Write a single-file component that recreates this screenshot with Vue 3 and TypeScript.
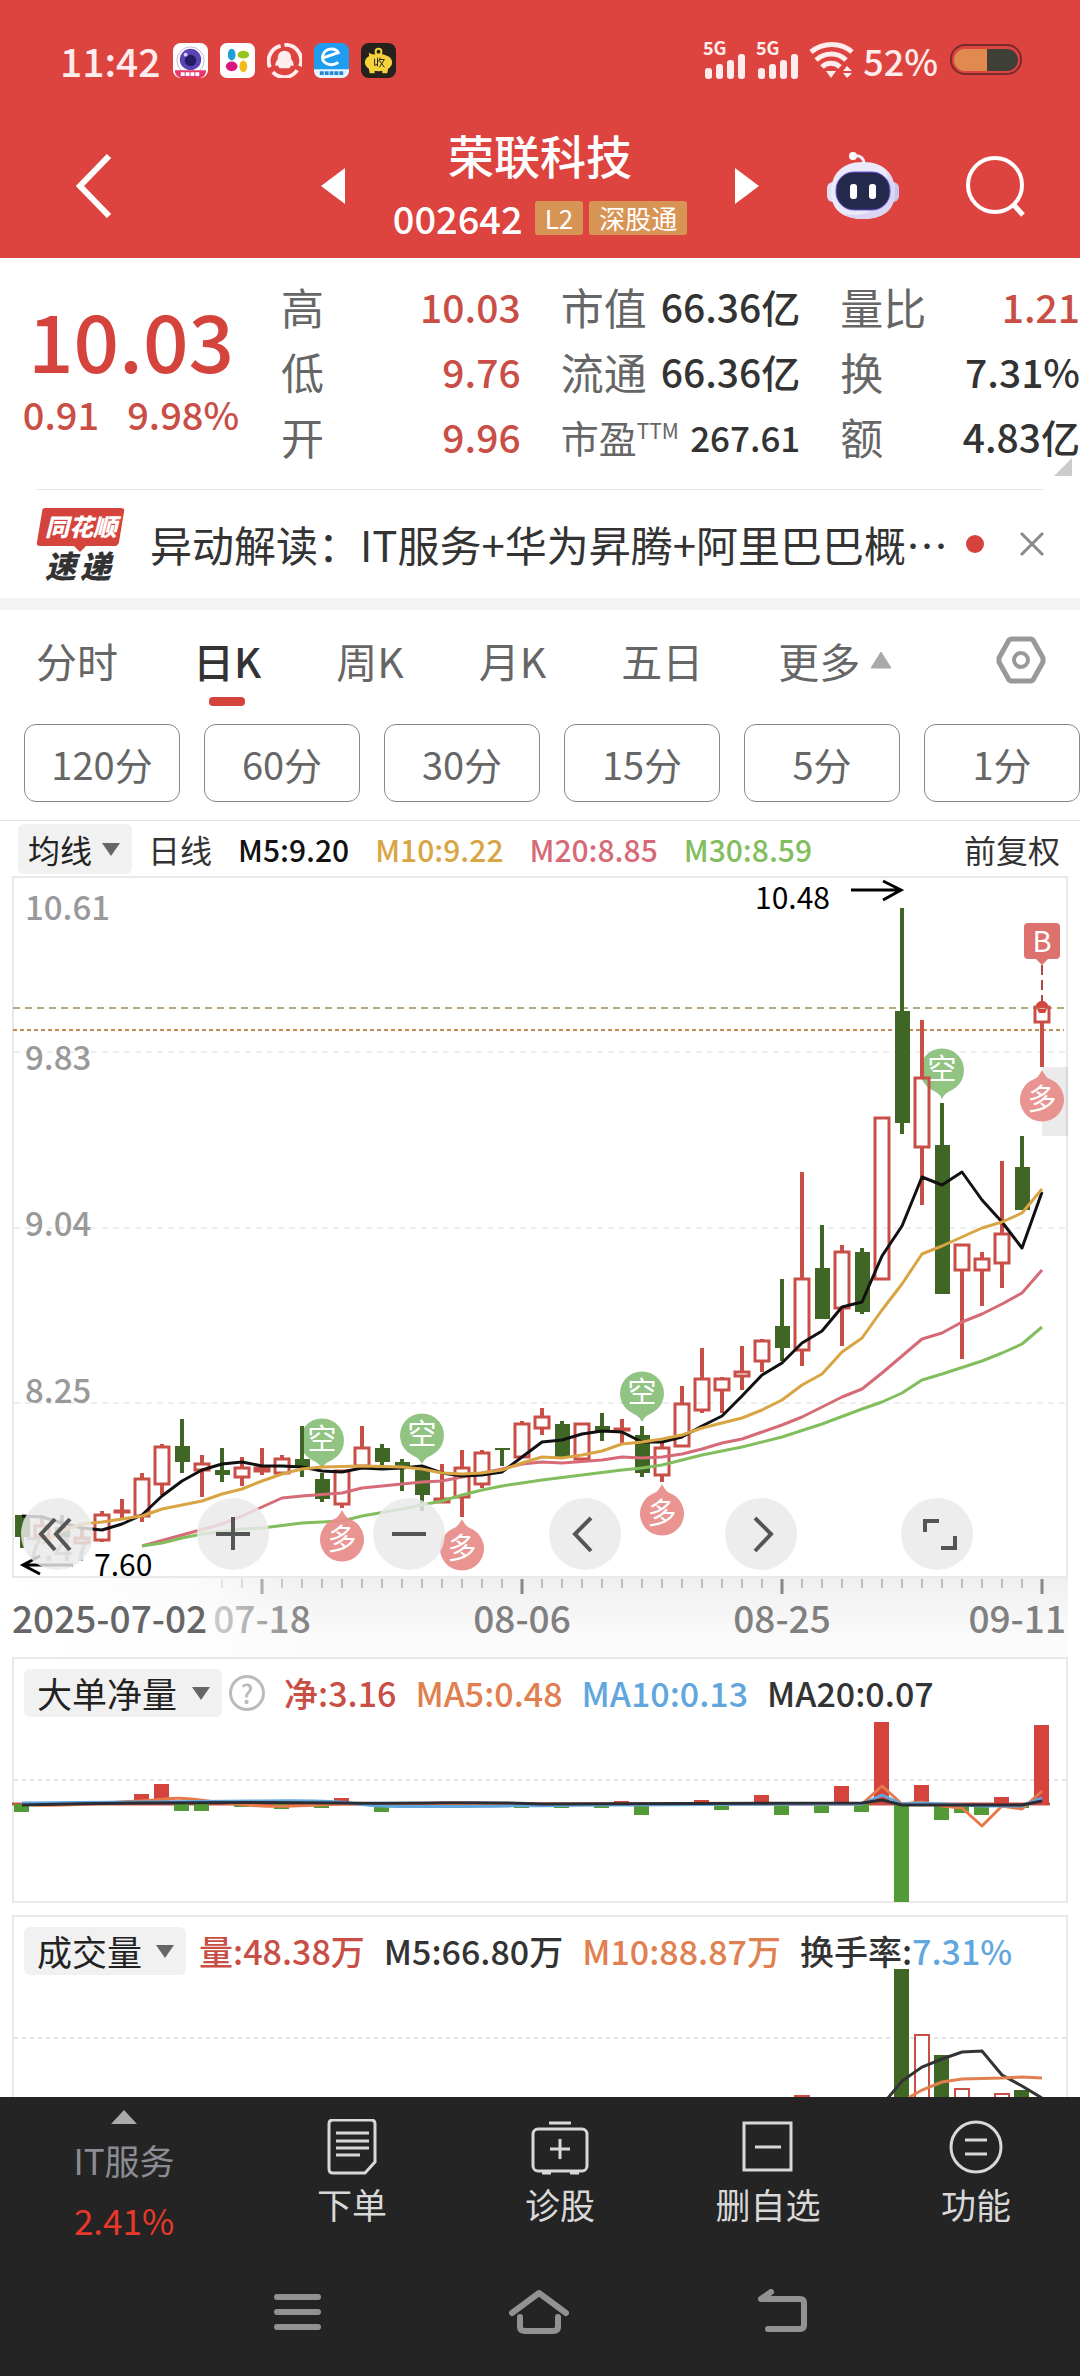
<script setup lang="ts">
import { ref } from 'vue'

type Candle = [high: number, top: number, bottom: number, low: number, up: 0 | 1]

const STEP = 20
const FIRST = 22
const cx = (i: number) => FIRST + i * STEP

const candles: Candle[] = [
  [1515, 1515, 1537, 1548, 0], [1515, 1525, 1537, 1537, 1], [1515, 1527, 1537, 1537, 0], [1528, 1537, 1544, 1544, 1],
  [1511, 1514, 1541, 1542, 1], [1499, 1510, 1512, 1518, 1], [1473, 1478, 1517, 1522, 1], [1444, 1446, 1485, 1495, 1],
  [1419, 1446, 1462, 1473, 0], [1455, 1463, 1471, 1497, 1], [1448, 1470, 1475, 1482, 0], [1457, 1467, 1478, 1486, 1],
  [1448, 1467, 1472, 1475, 1], [1455, 1458, 1474, 1474, 1], [1426, 1459, 1467, 1477, 0], [1473, 1479, 1499, 1502, 0],
  [1470, 1470, 1505, 1508, 1], [1426, 1447, 1467, 1467, 1], [1444, 1448, 1462, 1465, 0], [1459, 1462, 1466, 1491, 0],
  [1466, 1470, 1495, 1511, 0], [1464, 1498, 1503, 1503, 1], [1450, 1467, 1498, 1517, 1], [1450, 1452, 1485, 1488, 1],
  [1448, 1448, 1450, 1466, 0], [1421, 1423, 1458, 1458, 1], [1408, 1416, 1429, 1435, 1], [1421, 1424, 1457, 1457, 0],
  [1423, 1423, 1460, 1460, 1], [1413, 1426, 1431, 1441, 0], [1419, 1428, 1431, 1444, 1], [1426, 1435, 1473, 1477, 0],
  [1443, 1447, 1476, 1482, 1], [1386, 1403, 1447, 1447, 1], [1348, 1378, 1411, 1413, 1], [1377, 1378, 1391, 1413, 1],
  [1346, 1371, 1377, 1390, 1], [1339, 1340, 1362, 1372, 1], [1279, 1326, 1348, 1361, 0], [1172, 1278, 1351, 1366, 1],
  [1225, 1268, 1319, 1319, 0], [1245, 1251, 1309, 1346, 1], [1248, 1252, 1312, 1314, 0], [1117, 1117, 1280, 1280, 1],
  [908, 1011, 1123, 1134, 0], [1020, 1077, 1148, 1205, 1], [1103, 1145, 1294, 1294, 0], [1244, 1244, 1271, 1359, 1],
  [1252, 1258, 1271, 1306, 1], [1161, 1233, 1264, 1288, 1], [1136, 1167, 1210, 1210, 0], [1007, 1006, 1023, 1067, 1],
]

const averages = [
  { color: '#d66b77', points: '142,1546 182,1535 222,1524 242,1516 262,1507 282,1498 302,1496 342,1493 362,1488 382,1486 422,1482 442,1481 462,1477 482,1473 502,1469 522,1464 542,1462 562,1463 602,1460 622,1457 642,1458 662,1457 682,1454 702,1449 722,1443 742,1439 762,1432 782,1425 802,1417 822,1407 842,1397 862,1389 882,1373 902,1356 922,1339 942,1333 962,1322 982,1314 1002,1304 1022,1293 1042,1270' },
  { color: '#82bd5e', points: '142,1546 162,1543 182,1538 202,1534 242,1529 262,1528 302,1523 342,1521 362,1516 402,1509 442,1501 462,1495 482,1490 502,1486 522,1483 542,1480 582,1475 622,1470 642,1468 662,1465 702,1455 742,1447 782,1437 822,1424 862,1409 882,1402 902,1393 922,1380 942,1374 982,1361 1002,1353 1022,1344 1042,1327' },
  { color: '#111', points: '22,1516 42,1517 62,1523 82,1528 102,1530 122,1524 142,1515 162,1496 182,1481 202,1470 222,1464 242,1462 262,1466 282,1466 302,1467 322,1471 342,1472 362,1468 382,1469 402,1468 422,1466 442,1473 462,1476 482,1475 502,1472 522,1457 542,1442 562,1440 582,1434 602,1431 622,1432 642,1442 662,1442 682,1437 702,1426 722,1416 742,1396 762,1375 782,1363 802,1343 822,1331 842,1307 862,1302 882,1256 902,1226 922,1177 942,1185 962,1172 982,1200 1002,1222 1022,1248 1042,1192' },
  { color: '#d9a544', points: '42,1544 62,1531 82,1524 102,1522 122,1519 142,1516 162,1509 182,1505 202,1501 222,1494 242,1489 262,1481 282,1474 302,1469 322,1467 362,1466 402,1467 422,1469 442,1473 462,1474 482,1473 502,1470 522,1463 542,1457 562,1458 582,1455 602,1451 622,1444 642,1442 662,1439 682,1435 702,1428 722,1423 742,1418 762,1410 782,1400 802,1385 822,1374 842,1352 862,1338 882,1310 902,1284 922,1254 942,1246 962,1237 982,1228 1002,1222 1022,1213 1042,1189' },
]

const sells = [[322, 1441], [422, 1436], [642, 1394], [942, 1071]]
const buys = [[342, 1540], [462, 1549], [662, 1514], [1042, 1100]]
const priceLabels = [
  { y: 920, text: '10.61' }, { y: 1070, text: '9.83' }, { y: 1236, text: '9.04' },
  { y: 1403, text: '8.25' }, { y: 1561, text: '7.47' },
]

const ticks = Array.from({ length: 42 }, (_, n) => ({ x: cx(n + 10), major: n % 13 === 2 }))

// net large-order flow: [candle index, bar end]
const flow: [number, number][] = [
  [0, 1812], [6, 1794], [7, 1784], [8, 1811], [9, 1811], [11, 1807], [13, 1809], [15, 1808], [16, 1798], [18, 1812],
  [20, 1807], [25, 1808], [27, 1808], [29, 1808], [30, 1801], [31, 1815], [34, 1800], [35, 1810], [37, 1795],
  [38, 1815], [40, 1813], [41, 1786], [42, 1812], [43, 1722], [44, 1902], [45, 1785], [46, 1820], [47, 1813],
  [48, 1815], [49, 1797], [50, 1808], [51, 1725],
]
const volumes: [number, number, 0 | 1][] = [
  [39, 2095, 1], [44, 1969, 0], [45, 2034, 1], [46, 2055, 0], [47, 2088, 1], [49, 2093, 1], [50, 2090, 0],
]

const tabs = ['分时', '日K', '周K', '月K', '五日', '更多']
const active = ref('日K')
const periods = ['120分', '60分', '30分', '15分', '5分', '1分']
const tools = [
  { name: '最左', d: 'M34 21 20 36l14 16M49 21 35 36l14 16' },
  { name: '放大', d: 'M36 19v33M19 36h34' },
  { name: '缩小', d: 'M19 36h34' },
  { name: '左移', d: 'M42 20 26 36l16 17' },
  { name: '右移', d: 'M30 20l16 16-16 17' },
  { name: '全屏', d: 'M24 34V23h14M40 50h14V38' },
]
</script>

<template>
  <div class="page">
    <header class="top">
      <div class="status">
        <span class="clock">11:42</span>
        <svg class="app" viewBox="0 0 36 36"><rect width="36" height="36" rx="8" fill="#fff" /><circle cx="18" cy="18" r="14" fill="none" stroke="#b8b8d8" /><circle cx="18" cy="17" r="11" fill="#5b43b5" /><circle cx="18" cy="18" r="6" fill="#241d63" /><circle cx="13" cy="12" r="2" fill="#d9d0ff" /><path d="M2 28h32c0 5-3 8-8 8H10c-5 0-8-3-8-8z" fill="#e8386b" /><path d="M8 32h20" stroke="#fff" stroke-width="4" stroke-dasharray="4 1" /></svg>
        <svg class="app" viewBox="0 0 36 36"><rect width="36" height="36" rx="7" fill="#fff" /><ellipse cx="12" cy="12" rx="4" ry="6" fill="#1e9fd8" /><ellipse cx="24" cy="12" rx="6" ry="4" fill="#93c51e" /><ellipse cx="12" cy="24" rx="6" ry="5" fill="#d9177f" /><ellipse cx="24" cy="24" rx="4" ry="6" fill="#f3b916" /></svg>
        <svg class="app" viewBox="0 0 36 36"><g fill="none" stroke="#ffecec" stroke-width="4"><path d="M3 25A16 16 0 0 1 14 3" /><path d="M18 2a16 16 0 0 1 16 22" /><path d="M31 28a16 16 0 0 1-25 2" /></g><path d="M18 8c5 0 7 4 7 9 2 2 3 5 2 7l-2-1-2 3H13l-2-3-2 1c-1-2 0-5 2-7 0-5 2-9 7-9z" fill="#ffecec" /></svg>
        <svg class="app" viewBox="0 0 36 36"><rect width="36" height="36" rx="8" fill="#1d9cf0" /><path d="M0 27h36v1c0 5-3 8-8 8H8c-5 0-8-3-8-8z" fill="#e6f6ff" /><path d="M10 15l15-5C22 4 11 5 9 13s8 12 16 7" fill="none" stroke="#fff" stroke-width="3" /><path d="M6 31h24" stroke="#2387d8" stroke-width="4" stroke-dasharray="4 1" /></svg>
        <svg class="app" viewBox="0 0 36 36"><rect width="36" height="36" rx="8" fill="#25221d" /><ellipse cx="18" cy="20" rx="14" ry="9" fill="#f6d33c" /><path d="M8 26h6v5H9zM22 26h6l-1 5h-5zM8 10l7 3-6 4z" fill="#f6d33c" /><circle cx="18" cy="9" r="3" fill="none" stroke="#f6d33c" stroke-width="2" /><path d="M14 16v7l3-1M17 15v9M20 15l-2 4M19 17h5l-5 8M19 18l5 7" fill="none" stroke="#25221d" /></svg>
        <span class="grow"></span>
        <svg v-for="n in 2" :key="n" class="signal" viewBox="0 0 44 38"><text x="0" y="14" class="five">5G</text><g fill="#ffecec"><rect x="2" y="27" width="7" height="11" rx="3" /><rect x="13" y="23" width="7" height="15" rx="3" /><rect x="24" y="19" width="7" height="19" rx="3" /><rect x="35" y="13" width="7" height="25" rx="3" /></g></svg>
        <svg class="wifi" viewBox="0 0 46 38"><g fill="none" stroke="#ffecec" stroke-width="5"><path d="M2 11c12-10 30-10 41 0" /><path d="M7 19c9-8 22-8 30 0" /><path d="M13 26c5-5 13-5 18 0" /></g><path d="M17 30h10l-5 7zM34 30l4-5 5 5zM34 32h9l-5 5z" fill="#ffecec" /></svg>
        <span class="percent">52%</span>
        <svg class="battery" viewBox="0 0 72 32"><rect x="1" y="1" width="70" height="29" rx="14" fill="none" stroke="#7a2a2a" stroke-width="2" /><path d="M37 5v22H15a11 11 0 0 1 0-22z" fill="#e08a50" /><path d="M37 5v22h20a11 11 0 0 0 0-22z" fill="#3e4038" /></svg>
      </div>
      <div class="bar">
        <div class="left">
          <button aria-label="返回"><svg width="36" height="66" viewBox="0 0 36 66"><path d="M33 3 4 33l29 30" fill="none" stroke="#fff" stroke-width="6" /></svg></button>
          <button aria-label="上一只"><svg width="24" height="36" viewBox="0 0 24 36"><path d="M24 0v36L0 18z" fill="#fff" /></svg></button>
        </div>
        <div class="title">
          <h1>荣联科技</h1>
          <div class="code"><span>002642</span><em>L2</em><em>深股通</em></div>
        </div>
        <div class="right">
          <button aria-label="下一只"><svg width="24" height="36" viewBox="0 0 24 36"><path d="M0 0v36l24-18z" fill="#fff" /></svg></button>
          <button aria-label="智能助手">
            <svg width="72" height="68" viewBox="0 0 72 68"><circle cx="26" cy="4" r="4" fill="#fff" /><path d="M27 4c6-1 10 2 10 8" fill="none" stroke="#f3efff" stroke-width="3" /><rect x="0" y="30" width="12" height="20" rx="6" fill="#e3e0f6" /><rect x="60" y="30" width="12" height="20" rx="6" fill="#c9c4ee" /><path d="M36 10c22 0 32 13 32 30 0 18-12 27-32 27S4 58 4 40c0-17 10-30 32-30z" fill="#ece9fa" /><path d="M60 20c5 5 8 12 8 20 0 18-12 27-32 27-8 0-15-2-21-5 30 4 46-6 45-42z" fill="#d9d5f3" /><rect x="9" y="20" width="54" height="38" rx="18" fill="#232a4c" stroke="#6a53d8" stroke-width="1" /><rect x="23" y="32" width="7" height="15" rx="3" fill="#fff" /><rect x="42" y="32" width="7" height="15" rx="3" fill="#fff" /></svg>
          </button>
          <button aria-label="搜索"><svg width="60" height="62" viewBox="0 0 60 62"><circle cx="29" cy="30" r="27" fill="none" stroke="#fff" stroke-width="4" /><path d="M47 49l10 11" stroke="#fff" stroke-width="5" /></svg></button>
        </div>
      </div>
    </header>

    <section class="quote">
      <div class="price">
        <strong>10.03</strong>
        <p><span>0.91</span><span>9.98%</span></p>
      </div>
      <div class="cols">
        <dl class="red">
          <div><dt>高</dt><dd>10.03</dd></div>
          <div><dt>低</dt><dd>9.76</dd></div>
          <div><dt>开</dt><dd>9.96</dd></div>
        </dl>
        <dl>
          <div><dt>市值</dt><dd>66.36亿</dd></div>
          <div><dt>流通</dt><dd>66.36亿</dd></div>
          <div class="small"><dt>市盈<sup>TTM</sup></dt><dd>267.61</dd></div>
        </dl>
        <dl>
          <div class="red"><dt>量比</dt><dd>1.21</dd></div>
          <div><dt>换</dt><dd>7.31%</dd></div>
          <div><dt>额</dt><dd>4.83亿</dd></div>
        </dl>
      </div>
      <i class="corner"></i>
    </section>

    <section class="news">
      <svg width="90" height="74" viewBox="0 0 90 74">
        <path d="M9 1h76q4 0 3 4l-5 30q-1 4-4 4H50l-6 6-6-6H4q-4 0-3-4L6 5q0-4 3-4z" fill="#d5433d" />
        <text x="9" y="29" class="logo-a">同花顺</text>
        <text x="9" y="71" class="logo-b">速</text><text x="44" y="71" class="logo-b">递</text>
      </svg>
      <a href="#">异动解读：IT服务+华为昇腾+阿里巴巴概⋯</a>
      <i class="dot"></i>
      <button aria-label="关闭"><svg width="24" height="24" viewBox="0 0 24 24"><path d="M1 1l22 22M23 1 1 23" stroke="#8a8a8a" stroke-width="3" /></svg></button>
    </section>

    <nav class="tabs">
      <button v-for="t in tabs" :key="t" :class="{ on: t === active }" @click="active = t">
        {{ t }}<svg v-if="t === '更多'" width="22" height="18" viewBox="0 0 22 18"><path d="M11 1 21 17H1z" fill="#a9a9a9" stroke="#a9a9a9" stroke-linejoin="round" /></svg>
      </button>
      <button class="gear" aria-label="设置"><svg width="50" height="48" viewBox="0 0 50 48"><path d="M15 3h20l2 1 10 18v4L37 44l-2 1H15l-2-1L3 26v-4L13 4z" fill="none" stroke="#999" stroke-width="5" stroke-linejoin="round" /><circle cx="25" cy="24" r="7" fill="none" stroke="#999" stroke-width="4" /></svg></button>
    </nav>
    <div class="periods"><button v-for="p in periods" :key="p">{{ p }}</button></div>

    <div class="ma">
      <label class="pick main"><select aria-label="主图指标"><option>均线</option></select><i></i></label>
      <span class="ri">日线</span>
      <b style="color: #111">M5:9.20</b>
      <b style="color: #d9a544">M10:9.22</b>
      <b style="color: #d66b77">M20:8.85</b>
      <b style="color: #82bd5e">M30:8.59</b>
      <span class="fq">前复权</span>
    </div>

    <section class="kline">
      <svg viewBox="12 876 1056 702" class="draw">
        <rect x="13" y="877" width="1054" height="700" fill="#fff" stroke="#e9e9e9" stroke-width="2" />
        <g stroke="#ddd" stroke-width="1" stroke-dasharray="6 5"><path d="M14 1052h1052M14 1228h1052M14 1403h1052" /></g>
        <path d="M13 1008h1051" stroke="#b3ab7d" stroke-width="2" stroke-dasharray="7 5" />
        <path d="M13 1030h1051" stroke="#c48d57" stroke-width="2" stroke-dasharray="4 3" />
        <rect x="1042" y="1067" width="26" height="69" fill="#000" opacity=".08" />
        <text v-for="l in priceLabels" :key="l.y" x="25" :y="l.y" class="scale">{{ l.text }}</text>
        <g v-for="(p, i) in sells" :key="'s' + i">
          <path :transform="`translate(${p[0]} ${p[1]})`" d="M0 28c-3-6-6-7-10-9a22 22 0 1 1 20 0c-4 2-7 3-10 9z" fill="#91c383" />
          <text :x="p[0]" :y="p[1] + 9" class="mark">空</text>
        </g>
        <g v-for="(c, i) in candles" :key="i" :stroke="c[4] ? '#c84e46' : '#3f6624'">
          <path :d="`M${cx(i)} ${c[0]}V${c[1]}M${cx(i)} ${c[2]}V${c[3]}`" stroke-width="4" />
          <rect v-if="c[4]" :x="cx(i) - 7" :y="c[1] + 1" width="14" :height="Math.max(c[2] - c[1] - 2, 1)" fill="none" stroke-width="3" />
          <rect v-else :x="cx(i) - 7" :y="c[1]" width="15" :height="c[2] - c[1]" fill="#3f6624" stroke="none" />
        </g>
        <polyline v-for="a in averages" :key="a.color" :points="a.points" fill="none" :stroke="a.color" stroke-width="3" stroke-linejoin="round" />
        <g v-for="(p, i) in buys" :key="'b' + i">
          <path :transform="`translate(${p[0]} ${p[1]})`" d="M0-30c3 6 6 9 10 10a22 22 0 1 1-20 0c4-1 7-4 10-10z" fill="#e88d8a" fill-opacity=".94" />
          <text :x="p[0]" :y="p[1] + 10" class="mark">多</text>
        </g>
        <path d="M1028 923h28q4 0 4 4v28q0 4-4 4h-8l-6 6-6-6h-8q-4 0-4-4v-28q0-4 4-4z" fill="#dd716e" />
        <text x="1042" y="952" class="mark">B</text>
        <path d="M1042 965v38" stroke="#a84a48" stroke-width="2" stroke-dasharray="10 5" />
        <path d="M1036 1006a6 5 0 0 1 12 0zM1037 1009h10l-2 4h-6z" fill="#d5433d" />
        <text x="755" y="909" class="peak">10.48</text>
        <path d="M851 890h50M883 881l18 9-18 10" fill="none" stroke="#000" stroke-width="3" />
        <text x="94" y="1576" class="peak">7.60</text>
        <path d="M73 1565H24M40 1556l-17 9 17 9" fill="none" stroke="#000" stroke-width="3" />
      </svg>
      <div class="tools">
        <button v-for="t in tools" :key="t.name" :aria-label="t.name"><svg viewBox="0 0 72 72"><path :d="t.d" fill="none" stroke="#555" stroke-width="4" /></svg></button>
      </div>
    </section>

    <div class="axis">
      <svg viewBox="12 1578 1056 79" class="draw">
        <defs><linearGradient id="fade"><stop offset="0" stop-color="#fff" /><stop offset=".6" stop-color="#fff" stop-opacity=".75" /><stop offset="1" stop-color="#fff" stop-opacity="0" /></linearGradient></defs>
        <path v-for="t in ticks" :key="t.x" :d="`M${t.x} 1579v${t.major ? 15 : 9}`" stroke="#888" :stroke-width="t.major ? 3 : 1" />
        <g class="date" text-anchor="middle"><text x="262" y="1633">07-18</text><text x="522" y="1633">08-06</text><text x="782" y="1633">08-25</text></g>
        <text class="date" x="1066" y="1633" text-anchor="end">09-11</text>
        <rect x="12" y="1578" width="300" height="79" fill="url(#fade)" />
        <text class="date start" x="12" y="1633">2025-07-02</text>
      </svg>
    </div>

    <section class="panel">
      <div class="head">
        <label class="pick flow"><select aria-label="副图指标一"><option>大单净量</option></select><i></i></label>
        <button class="help" aria-label="说明">?</button>
        <b style="color: #c84e46">净:3.16</b><b style="color: #e07f50">MA5:0.48</b><b style="color: #62a6de">MA10:0.13</b><b>MA20:0.07</b>
      </div>
      <svg viewBox="12 1657 1056 246" class="draw">
        <rect x="13" y="1658" width="1054" height="244" fill="none" stroke="#e9e9e9" stroke-width="2" />
        <path d="M14 1780h1052" stroke="#e4e4e4" stroke-width="2" stroke-dasharray="4 4" />
        <path d="M12 1804h1038" stroke="#c84e46" stroke-width="3" />
        <rect v-for="[i, y] in flow" :key="i" :x="cx(i) - 8" :y="Math.min(y, 1804)" width="15" :height="Math.abs(y - 1804)" :fill="y < 1804 ? '#d5433d' : '#529a35'" />
        <g fill="none" stroke-width="3" stroke-linejoin="round">
          <path d="M22 1804C60 1808 110 1802 140 1801S170 1796 200 1800 240 1805 262 1806 300 1806 340 1804L862 1804 882 1786 902 1804 922 1802 942 1806 962 1808 982 1826 1002 1806 1022 1809 1042 1791" stroke="#e8794a" />
          <path d="M22 1803C80 1802 160 1802 262 1801S342 1804 382 1806 560 1804 862 1804L882 1795 902 1804 922 1803 982 1806 1022 1806 1042 1798" stroke="#62a6de" />
          <path d="M22 1805C120 1803 240 1802 342 1803S480 1801 542 1804L862 1803 882 1800 902 1805 1022 1805 1042 1801" stroke="#2c2c34" />
        </g>
      </svg>
    </section>

    <section class="panel last">
      <div class="head">
        <label class="pick vol"><select aria-label="副图指标二"><option>成交量</option></select><i></i></label>
        <b style="color: #c84e46">量:48.38万</b><b>M5:66.80万</b><b style="color: #e07f50">M10:88.87万</b><b>换手率:<span>7.31%</span></b>
      </div>
      <svg viewBox="12 1915 1056 182" class="draw">
        <path d="M13 2097V1916H1067V2097" fill="none" stroke="#e9e9e9" stroke-width="2" />
        <path d="M14 2038h1052" stroke="#e4e4e4" stroke-width="2" stroke-dasharray="4 4" />
        <g v-for="[i, y, up] in volumes" :key="i">
          <rect v-if="up" :x="cx(i) - 7" :y="y + 1" width="14" height="200" fill="#fff" stroke="#c84e46" stroke-width="2" />
          <rect v-else :x="cx(i) - 8" :y="y" width="15" height="200" fill="#3f6624" />
        </g>
        <polyline points="888,2098 902,2081 922,2067 942,2059 962,2052 982,2051 1002,2075 1022,2086 1042,2098" fill="none" stroke="#333" stroke-width="3" />
        <polyline points="908,2098 922,2090 942,2082 962,2079 1002,2078 1022,2077 1042,2078" fill="none" stroke="#e07f50" stroke-width="3" />
      </svg>
    </section>

    <footer>
      <div class="actions">
        <button class="sector"><svg width="28" height="16" viewBox="0 0 28 16"><path d="M14 1 27 15H1z" fill="#aaa" /></svg><span>IT服务</span><em>2.41%</em></button>
        <button><svg width="56" height="56" viewBox="0 0 56 56"><path d="M9 1h38q4 0 4 4v38L41 54H9q-4 0-4-4V5q0-4 4-4z" /><path d="M12 14h33M12 22h33M12 29h33M12 36h24" /></svg>下单</button>
        <button><svg width="60" height="56" viewBox="0 0 60 56"><rect x="3" y="10" width="54" height="42" rx="5" /><path d="M19 4h22M30 20v20M20 30h20M12 54h9M40 54h9" /></svg>诊股</button>
        <button><svg width="56" height="56" viewBox="0 0 56 56"><rect x="4" y="4" width="47" height="47" /><path d="M15 28h26" /></svg>删自选</button>
        <button><svg width="56" height="56" viewBox="0 0 56 56"><circle cx="28" cy="28" r="25" /><path d="M17 21h22M17 35h22" /></svg>功能</button>
      </div>
      <div class="system">
        <button aria-label="最近任务"><svg width="48" height="44" viewBox="0 0 48 44"><path d="M4 7h41M4 22h41M4 37h41" /></svg></button>
        <button aria-label="主屏幕"><svg width="60" height="46" viewBox="0 0 60 46"><path d="M3 24 30 4l27 20M11 28v10q0 4 5 4h28q5 0 5-4V28" /></svg></button>
        <button aria-label="后退"><svg width="50" height="46" viewBox="0 0 50 46"><path d="M14 3 4 10h39q4 0 4 4v22q0 4-4 4H11" /></svg></button>
      </div>
    </footer>
  </div>
</template>

<style>
body { margin: 0; background: #fff; }
</style>

<style scoped>
.page { font-family: "Noto Sans CJK SC", sans-serif; color: #333; overflow: hidden; }
button, select { font: inherit; color: inherit; background: none; border: 0; padding: 0; margin: 0; }
svg { display: block; flex: none; }
em, i { font-style: normal; }
.draw { width: 100%; height: auto; }
.grow { flex: 1; }

.top { background: #dd443f; color: #fff; }
.status { display: flex; align-items: center; height: 80px; padding: 20px 58px 0 60px; color: #ffecec; }
.clock { font-size: 39px; font-weight: 500; line-height: 40px; }
.app { width: 35px; height: 35px; margin-left: 12px; }
.signal { width: 44px; height: 38px; margin-right: 9px; overflow: visible; }
.five { font-size: 18px; font-weight: 700; fill: #ffecec; }
.wifi { width: 46px; height: 38px; }
.percent { font-size: 36px; font-weight: 500; line-height: 40px; margin: 0 12px 0 8px; }
.battery { width: 72px; height: 32px; }
.bar { display: grid; grid-template-columns: 1fr auto 1fr; align-items: center; height: 144px; padding-top: 14px; }
.left, .right { display: flex; justify-content: space-between; align-items: center; }
.left { padding: 0 48px 0 76px; }
.right { padding: 0 54px 0 48px; }
h1 { margin: 0; font-size: 46px; line-height: 64px; font-weight: 500; text-align: center; }
.code { display: flex; align-items: center; height: 64px; gap: 6px; font-size: 38px; font-weight: 500; line-height: 40px; }
.code span { margin-right: 6px; }
.code em { background: #d79455; border-radius: 3px; font-size: 26px; font-weight: 400; line-height: 34px; height: 34px; padding: 0 10px; }

.quote { position: relative; display: flex; height: 232px; }
.quote::after { content: ""; position: absolute; left: 36px; right: 36px; bottom: 0; height: 1px; background: #e8e8e8; }
.price { width: 262px; text-align: center; color: #d5433d; padding-top: 36px; box-sizing: border-box; }
.price strong { display: block; font-size: 80px; font-weight: 500; line-height: 88px; }
.price p { display: flex; justify-content: center; gap: 28px; margin: 10px 0 0; font-size: 38px; font-weight: 500; line-height: 44px; color: #c84e46; }
.cols { flex: 1; display: grid; grid-template-columns: repeat(3, 1fr); gap: 40px; padding: 16px 0 0 19px; }
dl { margin: 0; }
dl > div { display: flex; justify-content: space-between; align-items: center; height: 65px; white-space: nowrap; }
dt { font-size: 43px; line-height: 65px; color: #666; }
dd { margin: 0; font-size: 39px; line-height: 65px; font-weight: 500; }
.red dd { color: #c84e46; }
.small dt { font-size: 38px; }
.small dd { font-size: 35px; }
sup { font-size: 21px; line-height: 20px; vertical-align: 14px; }
.corner { position: absolute; right: 8px; bottom: 14px; border: 9px solid; border-color: transparent #ccc #ccc transparent; }

.news { display: flex; align-items: center; height: 108px; padding: 0 36px; border-bottom: 12px solid #f4f4f4; }
.news svg { overflow: visible; }
.news a { flex: 1; margin-left: 24px; font-size: 42px; line-height: 60px; color: #333; text-decoration: none; white-space: nowrap; }
.dot { width: 18px; height: 18px; border-radius: 9px; background: #d5433d; margin-right: 36px; }
.logo-a { font-size: 24px; font-weight: 900; font-style: italic; fill: #fff; }
.logo-b { font-size: 31px; font-weight: 900; font-style: italic; fill: #333; }

.tabs { display: flex; gap: 75px; align-items: center; height: 100px; padding: 0 34px 0 36px; font-size: 41px; line-height: 60px; color: #666; }
.tabs button { position: relative; display: flex; align-items: center; gap: 10px; }
.tabs .gear { margin-left: auto; }
.tabs .on { color: #333; font-weight: 500; }
.tabs .on::after { content: ""; position: absolute; left: 50%; margin-left: -18px; top: 67px; width: 36px; height: 9px; border-radius: 4px; background: #d5433d; }
.periods { display: flex; gap: 24px; padding: 14px 0 18px 24px; border-bottom: 1px solid #e4e4e4; }
.periods button { flex: 1; height: 78px; box-sizing: border-box; border: 1px solid #888; border-radius: 12px; font-size: 38px; color: #666; }

.ma { display: flex; align-items: center; height: 55px; padding: 0 20px 0 18px; font-size: 32px; }
.ma b, .head b { font-weight: 500; white-space: nowrap; }
.ma b { margin-right: 26px; font-size: 30px; }
.ri { margin: 0 26px 0 16px; }
.fq { margin-left: auto; }
.pick { position: relative; display: block; background: #f1f1f1; border-radius: 6px; }
.pick select { appearance: none; width: 100%; height: 100%; color: #222; }
.pick i { position: absolute; right: 12px; top: 50%; margin-top: -6px; border: 9px solid transparent; border-top: 13px solid #666; border-bottom: 0; pointer-events: none; }
.pick.main { width: 114px; height: 50px; }
.pick.main select { padding-left: 10px; }

.kline { position: relative; padding: 0 12px; }
.tools { position: absolute; left: 21px; bottom: 8px; display: flex; gap: 104px; }
.tools button { width: 72px; height: 72px; border-radius: 36px; background: rgba(233, 233, 233, .84); }
.scale { font-size: 33px; font-weight: 500; fill: #999; }
.peak { font-size: 30px; fill: #000; }
.mark { font-size: 29px; fill: #fff; text-anchor: middle; }
.axis { margin: 0 12px; background: linear-gradient(#efefef, #fbfbfb 75%); }
.date { font-size: 37px; font-weight: 500; fill: #808080; }
.start { fill: #666; }

.panel { position: relative; padding: 0 12px; margin-bottom: 12px; }
.panel.last { margin-bottom: 0; }
.head { position: absolute; left: 24px; top: 12px; display: flex; align-items: center; height: 48px; gap: 19px; font-size: 34px; line-height: 48px; z-index: 1; }
.head b span { color: #62a6de; }
.pick.flow { width: 198px; height: 48px; margin-right: -12px; }
.pick.vol { width: 162px; height: 48px; margin-right: -6px; }
.head select { padding-left: 13px; font-size: 35px; }
.help { width: 36px; height: 36px; box-sizing: border-box; border: 3px solid #bbb; border-radius: 18px; color: #bbb; font-size: 26px; line-height: 28px; font-weight: 500; }

footer { background: #242424; color: #d8d8d8; }
.actions { display: grid; grid-template-columns: 248px repeat(4, 1fr); padding: 12px 0 0; height: 150px; }
.actions button { display: flex; flex-direction: column; align-items: center; font-size: 35px; line-height: 50px; padding-top: 10px; gap: 4px; justify-content: flex-start; }
.actions svg { fill: none; stroke: #d8d8d8; stroke-width: 3; }
.actions .sector { padding: 0; gap: 10px; color: #8c8c94; }
.actions .sector svg { stroke: none; }
.sector em { color: #e8382a; }
.system { display: flex; justify-content: center; align-items: center; gap: 188px; height: 105px; padding-bottom: 12px; }
.system svg { fill: none; stroke: #929292; stroke-width: 6; stroke-linecap: round; stroke-linejoin: round; }
</style>
